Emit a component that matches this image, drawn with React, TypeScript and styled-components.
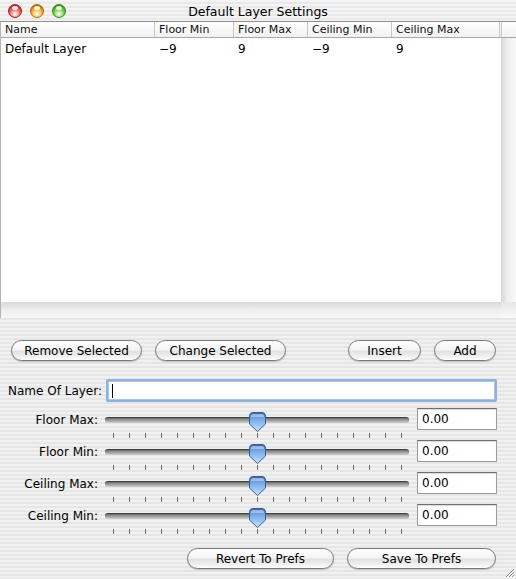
import React from "react";
import styled, { createGlobalStyle } from "styled-components";

const Global = createGlobalStyle`
  html, body { margin: 0; padding: 0; }
  body { font-family: "DejaVu Sans", "Liberation Sans", sans-serif; }
`;

const FONT = `"DejaVu Sans", "Liberation Sans", sans-serif`;

const Window = styled.div`
  width: 516px;
  height: 579px;
  position: relative;
  display: flex;
  flex-direction: column;
  overflow: hidden;
  background: repeating-linear-gradient(
    to bottom,
    #f1f1f1 0px,
    #f1f1f1 2px,
    #e6e6e6 2px,
    #e6e6e6 4px
  );
  font-family: ${FONT};
  color: #000;
`;

const TitleBar = styled.div`
  height: 21px;
  flex: none;
  display: flex;
  align-items: center;
  position: relative;
  border-bottom: 1px solid #8e8e8e;
  background: repeating-linear-gradient(
    to bottom,
    #f4f4f4 0px,
    #f4f4f4 2px,
    #e9e9e9 2px,
    #e9e9e9 4px
  );
`;

const Lights = styled.div`
  display: flex;
  gap: 8px;
  padding-left: 8px;
  position: relative;
  z-index: 1;
`;

const Light = styled.div<{ $c: string; $d: string }>`
  width: 14px;
  height: 14px;
  border-radius: 50%;
  box-sizing: border-box;
  border: 1px solid ${(p) => p.$d};
  background: radial-gradient(
    circle at 50% 75%,
    #ffffff 0%,
    ${(p) => p.$c} 50%,
    ${(p) => p.$d} 100%
  );
  box-shadow: inset 0 1px 1px rgba(0, 0, 0, 0.25);
  position: relative;
  &::after {
    content: "";
    position: absolute;
    left: 3px;
    top: 1px;
    width: 6px;
    height: 4px;
    border-radius: 50%;
    background: rgba(255, 255, 255, 0.85);
  }
`;

const Title = styled.div`
  position: absolute;
  left: 0;
  right: 0;
  top: 0;
  bottom: 0;
  display: flex;
  align-items: center;
  justify-content: center;
  font-size: 12.5px;
  padding-top: 1px;
`;

const TableArea = styled.div`
  height: 296px;
  flex: none;
  display: grid;
  grid-template-columns: 500px 16px;
  grid-template-rows: 16px 264px 16px;
  background: #fff;
  border-left: 1px solid #b4b4b4;
  box-sizing: border-box;
`;

const HeaderRow = styled.div`
  display: grid;
  grid-template-columns: 154px 79px 74px 84px 108px;
  background: linear-gradient(to bottom, #ffffff, #f1f1f1);
  border-bottom: 1px solid #a8a8a8;
  box-sizing: border-box;
`;

const HeaderCorner = styled.div`
  background: linear-gradient(to bottom, #ffffff, #f1f1f1);
  border-bottom: 1px solid #a8a8a8;
  border-left: 1px solid #c6c6c6;
  box-sizing: border-box;
`;

const HeaderCell = styled.div`
  font-size: 11px;
  line-height: 15px;
  padding-left: 4px;
  border-right: 1px solid #c6c6c6;
  white-space: nowrap;
  overflow: hidden;
  color: #111;
`;

const Body = styled.div`
  background: #fff;
`;

const DataRow = styled.div`
  display: grid;
  grid-template-columns: 154px 79px 74px 84px 108px;
  height: 22px;
  align-items: center;
`;

const DataCell = styled.div`
  font-size: 12px;
  padding-left: 4px;
  white-space: nowrap;
`;

const VChannel = styled.div`
  background: linear-gradient(to right, #d6d6d6, #eeeeee 40%, #fafafa);
`;

const HChannel = styled.div`
  background: linear-gradient(to bottom, #d8d8d8, #efefef 50%, #f8f8f8);
`;

const Corner = styled.div`
  background: linear-gradient(to bottom, #e6e6e6, #fafafa);
`;

const ButtonRow = styled.div<{ $top: number }>`
  display: flex;
  align-items: center;
  margin-top: ${(p) => p.$top}px;
  padding: 0 20px 0 11px;
  height: 21px;
  flex: none;
`;

const Spacer = styled.div`
  flex: 1;
`;

const PillButton = styled.button<{ $w: number; $ml?: number }>`
  width: ${(p) => p.$w}px;
  margin-left: ${(p) => p.$ml ?? 0}px;
  height: 21px;
  border-radius: 11px;
  border: 1px solid #7a7a7a;
  background: linear-gradient(
    to bottom,
    #ffffff 0%,
    #f4f4f4 45%,
    #e2e2e2 55%,
    #f2f2f2 85%,
    #ffffff 100%
  );
  box-shadow: 0 1px 1px rgba(0, 0, 0, 0.2);
  font-family: ${FONT};
  font-size: 12px;
  color: #000;
  padding: 0;
  display: flex;
  align-items: center;
  justify-content: center;
  flex: none;
`;

const NameRow = styled.div`
  display: flex;
  align-items: center;
  margin-top: 18px;
  height: 23px;
  flex: none;
`;

const Label = styled.div<{ $w: number }>`
  width: ${(p) => p.$w}px;
  text-align: right;
  font-size: 12px;
  white-space: nowrap;
  flex: none;
`;

const NameInput = styled.div`
  margin-left: 4px;
  width: 391px;
  height: 23px;
  box-sizing: border-box;
  border: 2px solid #8fb0d8;
  border-radius: 2px;
  background: #fff;
  box-shadow: inset 0 0 0 1px #a9c4e6;
  display: flex;
  align-items: center;
  padding-left: 4px;
`;

const Caret = styled.div`
  width: 1px;
  height: 14px;
  background: #000;
`;

const SliderList = styled.div`
  display: flex;
  flex-direction: column;
  margin-top: 6px;
  flex: none;
`;

const SliderRowBox = styled.div`
  display: flex;
  align-items: flex-start;
  height: 32px;
`;

const SliderLabel = styled(Label)`
  line-height: 24px;
`;

const Slider = styled.div`
  position: relative;
  width: 304px;
  height: 32px;
  margin-left: 7px;
  flex: none;
`;

const Track = styled.div`
  position: absolute;
  left: 0;
  right: 0;
  top: 9px;
  height: 6px;
  border-radius: 3px;
  background: linear-gradient(to bottom, #5a5a5a, #9a9a9a 50%, #cfcfcf);
  box-shadow: inset 0 1px 1px rgba(0, 0, 0, 0.4);
`;

const Ticks = styled.div`
  position: absolute;
  left: 8px;
  top: 25px;
  width: 289px;
  height: 5px;
  display: flex;
  justify-content: space-between;
`;

const Tick = styled.div`
  width: 1px;
  height: 5px;
  background: #6a6a6a;
`;

const Thumb = styled.svg`
  position: absolute;
  left: 144px;
  top: 4px;
`;

const ValueField = styled.div`
  margin-left: 8px;
  width: 80px;
  height: 22px;
  box-sizing: border-box;
  border: 1px solid #9a9a9a;
  border-top-color: #6f6f6f;
  background: #fff;
  box-shadow: inset 0 1px 1px rgba(0, 0, 0, 0.15);
  font-size: 12px;
  display: flex;
  align-items: center;
  padding-left: 4px;
  flex: none;
`;

const Grow = styled.svg`
  position: absolute;
  right: 1px;
  bottom: 1px;
`;

function ThumbIcon() {
  return (
    <Thumb width="17" height="20" viewBox="0 0 17 20">
      <defs>
        <linearGradient id="tg" x1="0" y1="0" x2="0" y2="1">
          <stop offset="0" stopColor="#2a5fb0" />
          <stop offset="0.3" stopColor="#6fa6e8" />
          <stop offset="0.7" stopColor="#9cc8f4" />
          <stop offset="1" stopColor="#cfe6fb" />
        </linearGradient>
      </defs>
      <path
        d="M4 0.5 H13 Q16.5 0.5 16.5 4 V12 L8.5 19.5 L0.5 12 V4 Q0.5 0.5 4 0.5 Z"
        fill="url(#tg)"
        stroke="#3a5f8f"
        strokeWidth="1"
      />
      <path d="M4 2 H13 Q15 2 15 4 V5 H2 V4 Q2 2 4 2 Z" fill="rgba(255,255,255,0.45)" />
    </Thumb>
  );
}

function SliderRow({ label }: { label: string }) {
  return (
    <SliderRowBox>
      <SliderLabel $w={98}>{label}</SliderLabel>
      <Slider>
        <Track />
        <Ticks>
          {Array.from({ length: 19 }).map((_, i) => (
            <Tick key={i} />
          ))}
        </Ticks>
        <ThumbIcon />
      </Slider>
      <ValueField>0.00</ValueField>
    </SliderRowBox>
  );
}

export default function App() {
  return (
    <>
      <Global />
      <Window>
        <TitleBar>
          <Lights>
            <Light $c="#f06060" $d="#a82020" />
            <Light $c="#f8b030" $d="#b06a00" />
            <Light $c="#70d040" $d="#2e8a10" />
          </Lights>
          <Title>Default Layer Settings</Title>
        </TitleBar>
        <TableArea>
          <HeaderRow>
            <HeaderCell>Name</HeaderCell>
            <HeaderCell>Floor Min</HeaderCell>
            <HeaderCell>Floor Max</HeaderCell>
            <HeaderCell>Ceiling Min</HeaderCell>
            <HeaderCell>Ceiling Max</HeaderCell>
          </HeaderRow>
          <HeaderCorner />
          <Body>
            <DataRow>
              <DataCell>Default Layer</DataCell>
              <DataCell>−9</DataCell>
              <DataCell>9</DataCell>
              <DataCell>−9</DataCell>
              <DataCell>9</DataCell>
            </DataRow>
          </Body>
          <VChannel />
          <HChannel />
          <Corner />
        </TableArea>
        <ButtonRow $top={22}>
          <PillButton $w={131}>Remove Selected</PillButton>
          <PillButton $w={131} $ml={13}>Change Selected</PillButton>
          <Spacer />
          <PillButton $w={73}>Insert</PillButton>
          <PillButton $w={62} $ml={13}>Add</PillButton>
        </ButtonRow>
        <NameRow>
          <Label $w={102}>Name Of Layer:</Label>
          <NameInput>
            <Caret />
          </NameInput>
        </NameRow>
        <SliderList>
          <SliderRow label="Floor Max:" />
          <SliderRow label="Floor Min:" />
          <SliderRow label="Ceiling Max:" />
          <SliderRow label="Ceiling Min:" />
        </SliderList>
        <ButtonRow $top={12}>
          <Spacer />
          <PillButton $w={147}>Revert To Prefs</PillButton>
          <PillButton $w={149} $ml={13}>Save To Prefs</PillButton>
        </ButtonRow>
        <Grow width="11" height="11" viewBox="0 0 11 11">
          <path d="M10 2 L2 10 M10 5 L5 10 M10 8 L8 10" stroke="#8a8a8a" strokeWidth="1" />
          <path d="M11 3 L3 11 M11 6 L6 11 M11 9 L9 11" stroke="#ffffff" strokeWidth="1" />
        </Grow>
      </Window>
    </>
  );
}
